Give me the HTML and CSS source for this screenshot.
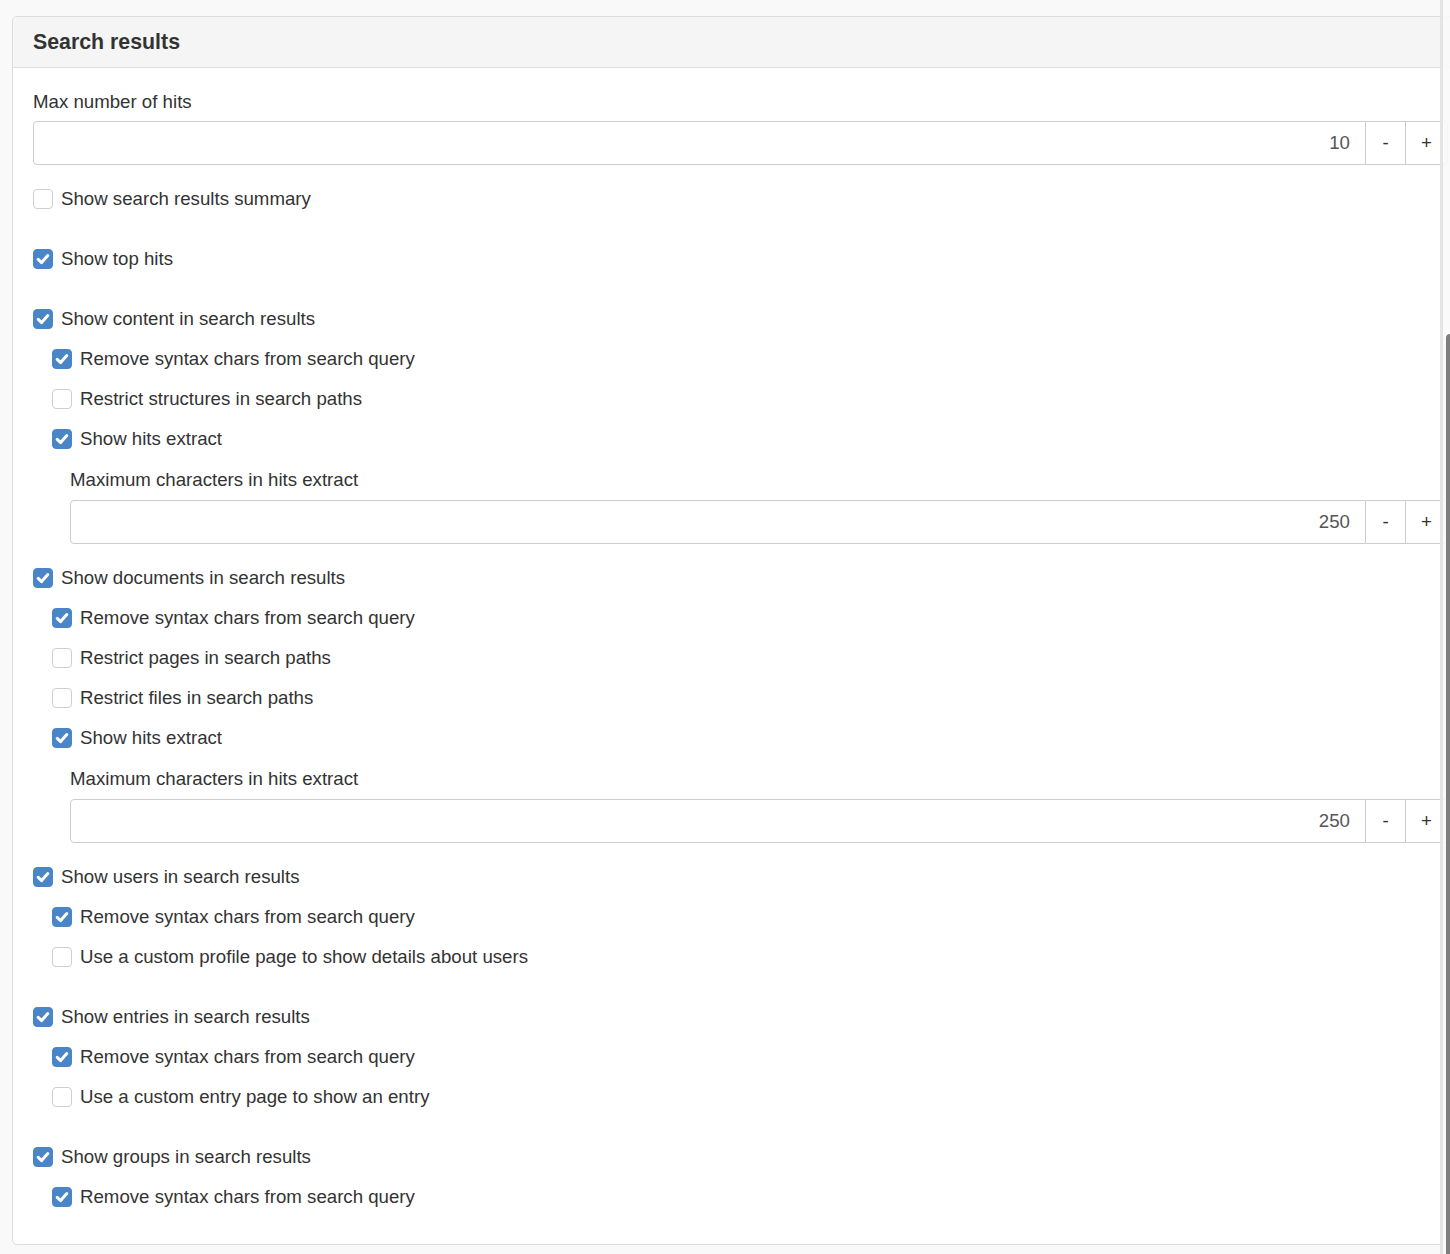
FILE: index.html
```html
<!DOCTYPE html>
<html>
<head>
<meta charset="utf-8">
<link rel="stylesheet" href="styles.css">
</head>
<body>
<div class="page">
  <div class="panel">
    <div class="panel-heading">Search results</div>
    <div class="panel-body">
      <div class="field-label">Max number of hits</div>
      <div class="input-group">
        <div class="input">10</div>
        <div class="btn">-</div>
        <div class="btn btn-last">+</div>
      </div>

      <div class="group">
        <label class="check"><span class="box"></span>Show search results summary</label>
      </div>

      <div class="group">
        <label class="check"><span class="box on"><svg viewBox="0 0 20 20"><path d="M5.2 10.4 L8.6 13.6 L14.8 6.6"/></svg></span>Show top hits</label>
      </div>

      <div class="group flush">
        <label class="check"><span class="box on"><svg viewBox="0 0 20 20"><path d="M5.2 10.4 L8.6 13.6 L14.8 6.6"/></svg></span>Show content in search results</label>
        <div class="sub">
          <label class="check"><span class="box on"><svg viewBox="0 0 20 20"><path d="M5.2 10.4 L8.6 13.6 L14.8 6.6"/></svg></span>Remove syntax chars from search query</label>
          <label class="check"><span class="box"></span>Restrict structures in search paths</label>
          <label class="check"><span class="box on"><svg viewBox="0 0 20 20"><path d="M5.2 10.4 L8.6 13.6 L14.8 6.6"/></svg></span>Show hits extract</label>
        </div>
        <div class="sub-field">
          <div class="field-label sub-label">Maximum characters in hits extract</div>
          <div class="input-group">
            <div class="input">250</div>
            <div class="btn">-</div>
            <div class="btn btn-last">+</div>
          </div>
        </div>
      </div>

      <div class="group flush">
        <label class="check"><span class="box on"><svg viewBox="0 0 20 20"><path d="M5.2 10.4 L8.6 13.6 L14.8 6.6"/></svg></span>Show documents in search results</label>
        <div class="sub">
          <label class="check"><span class="box on"><svg viewBox="0 0 20 20"><path d="M5.2 10.4 L8.6 13.6 L14.8 6.6"/></svg></span>Remove syntax chars from search query</label>
          <label class="check"><span class="box"></span>Restrict pages in search paths</label>
          <label class="check"><span class="box"></span>Restrict files in search paths</label>
          <label class="check"><span class="box on"><svg viewBox="0 0 20 20"><path d="M5.2 10.4 L8.6 13.6 L14.8 6.6"/></svg></span>Show hits extract</label>
        </div>
        <div class="sub-field">
          <div class="field-label sub-label">Maximum characters in hits extract</div>
          <div class="input-group">
            <div class="input">250</div>
            <div class="btn">-</div>
            <div class="btn btn-last">+</div>
          </div>
        </div>
      </div>

      <div class="group">
        <label class="check"><span class="box on"><svg viewBox="0 0 20 20"><path d="M5.2 10.4 L8.6 13.6 L14.8 6.6"/></svg></span>Show users in search results</label>
        <div class="sub">
          <label class="check"><span class="box on"><svg viewBox="0 0 20 20"><path d="M5.2 10.4 L8.6 13.6 L14.8 6.6"/></svg></span>Remove syntax chars from search query</label>
          <label class="check"><span class="box"></span>Use a custom profile page to show details about users</label>
        </div>
      </div>

      <div class="group">
        <label class="check"><span class="box on"><svg viewBox="0 0 20 20"><path d="M5.2 10.4 L8.6 13.6 L14.8 6.6"/></svg></span>Show entries in search results</label>
        <div class="sub">
          <label class="check"><span class="box on"><svg viewBox="0 0 20 20"><path d="M5.2 10.4 L8.6 13.6 L14.8 6.6"/></svg></span>Remove syntax chars from search query</label>
          <label class="check"><span class="box"></span>Use a custom entry page to show an entry</label>
        </div>
      </div>

      <div class="group">
        <label class="check"><span class="box on"><svg viewBox="0 0 20 20"><path d="M5.2 10.4 L8.6 13.6 L14.8 6.6"/></svg></span>Show groups in search results</label>
        <div class="sub">
          <label class="check"><span class="box on"><svg viewBox="0 0 20 20"><path d="M5.2 10.4 L8.6 13.6 L14.8 6.6"/></svg></span>Remove syntax chars from search query</label>
        </div>
      </div>
    </div>
  </div>
  <div class="scroll-track"></div>
  <div class="scroll-thumb"></div>
</div>
</body>
</html>
```
FILE: styles.css
```css
html, body {
  margin: 0;
  padding: 0;
  background: #f9f9f9;
  overflow: hidden;
}
body {
  font-family: "Liberation Sans", Arial, Helvetica, sans-serif;
  font-size: 18.67px;
  color: #333;
  width: 1450px;
  height: 1254px;
}
.page {
  position: relative;
  width: 1450px;
  height: 1254px;
  overflow: hidden;
  padding: 16px 0 0 12px;
  box-sizing: border-box;
}
.panel {
  width: 1457px;
  background: #fff;
  border: 1px solid #dcdcdc;
  border-radius: 5px;
  box-sizing: border-box;
}
.panel-heading {
  height: 51px;
  box-sizing: border-box;
  background: #f5f5f5;
  border-bottom: 1px solid #dcdcdc;
  border-radius: 5px 5px 0 0;
  padding: 0 20px;
  display: flex;
  align-items: center;
  font-weight: bold;
  font-size: 21.33px;
  color: #333;
}
.panel-body {
  padding: 13px 20px 7px 20px;
}
.field-label {
  height: 40px;
  display: flex;
  align-items: center;
  padding-top: 1px;
  box-sizing: border-box;
}
.input-group {
  display: flex;
  height: 44px;
  margin-bottom: 14px;
}
.input {
  flex: 1;
  border: 1px solid #cccccc;
  border-radius: 4px 0 0 4px;
  display: flex;
  align-items: center;
  justify-content: flex-end;
  padding-right: 15px;
  color: #555;
}
.btn {
  width: 40px;
  border: 1px solid #cccccc;
  border-left: none;
  display: flex;
  align-items: center;
  justify-content: center;
  color: #333;
  background: #fff;
  box-sizing: border-box;
}
.btn-last {
  width: 42px;
  border-radius: 0 4px 4px 0;
}
.group {
  margin-bottom: 20px;
}
.group.flush {
  margin-bottom: 0;
}
.check {
  height: 40px;
  display: flex;
  align-items: center;
}
.box {
  width: 20px;
  height: 20px;
  box-sizing: border-box;
  border: 1px solid #cfcfcf;
  border-radius: 4px;
  background: #fff;
  margin-right: 8px;
  flex: none;
  display: flex;
  align-items: center;
  justify-content: center;
}
.box.on {
  background: #4a86c7;
  border-color: #4a86c7;
}
.box svg {
  width: 20px;
  height: 20px;
  flex: none;
}
.box svg path {
  fill: none;
  stroke: #fff;
  stroke-width: 3;
  stroke-linecap: round;
  stroke-linejoin: round;
}
.sub {
  padding-left: 19px;
}
.sub-field {
  padding-left: 37px;
}
.sub-label {
  height: 40px;
  margin-bottom: 1px;
}
.scroll-track {
  position: absolute;
  top: 0;
  left: 1440px;
  width: 10px;
  height: 1254px;
  border-left: 3px solid #e4e4e4;
  background: rgba(249, 249, 249, 0.88);
  box-sizing: border-box;
}
.scroll-thumb {
  position: absolute;
  top: 334px;
  left: 1446px;
  width: 6px;
  height: 940px;
  background: #7e7e7e;
  border-radius: 4px 0 0 0;
}
```
